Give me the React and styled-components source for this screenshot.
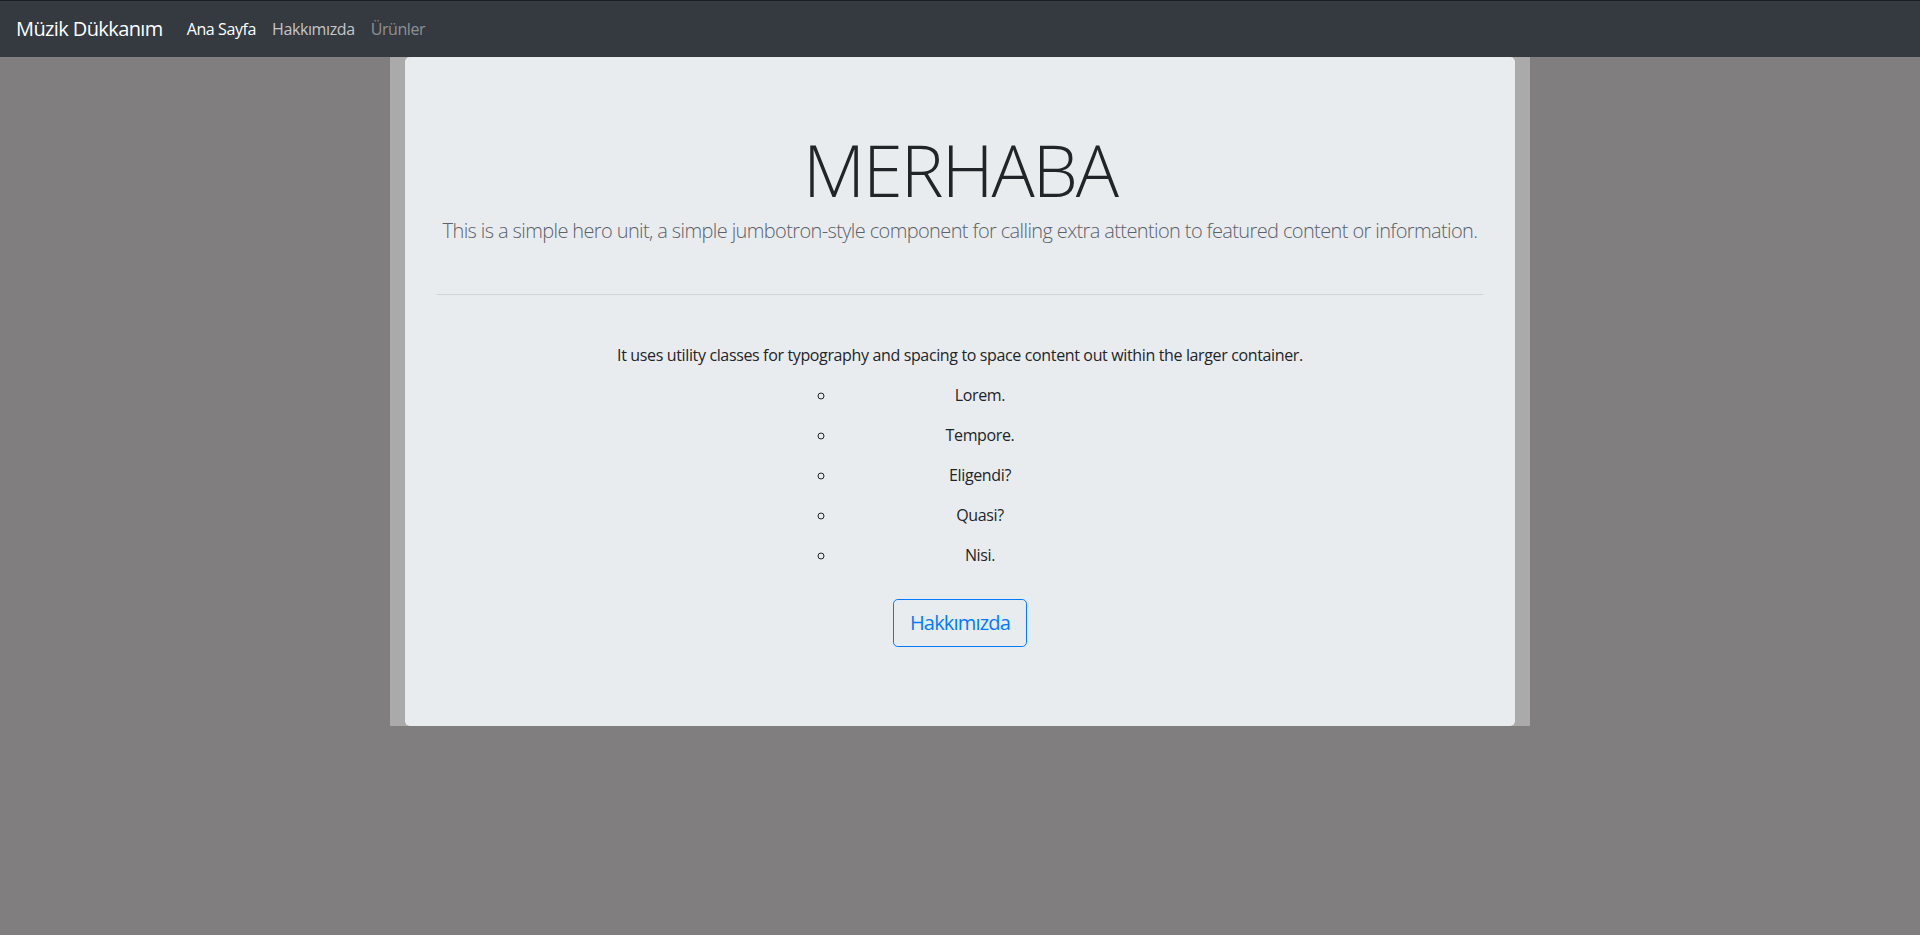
import React from "react";
import styled, { createGlobalStyle } from "styled-components";

const GlobalStyle = createGlobalStyle`
  html, body { margin: 0; padding: 0; }
  body {
    background: #807e7e;
    font-family: "Open Sans", "Noto Sans", sans-serif;
    color: #212529;
    -webkit-font-smoothing: antialiased;
  }
  * { box-sizing: border-box; }
`;

const Navbar = styled.nav`
  display: flex;
  align-items: center;
  padding: 8px 16px;
  background: #343a40;
  border-top: 1px solid #1c1f22;
`;

const Brand = styled.a`
  font-size: 20px;
  line-height: 30px;
  padding: 5px 0;
  margin-right: 16px;
  color: #fff;
  text-decoration: none;
  letter-spacing: -0.6px;
`;

const NavList = styled.div`
  display: flex;
`;

const NavLink = styled.a`
  padding: 8px;
  font-size: 16px;
  line-height: 24px;
  letter-spacing: -0.4px;
  text-decoration: none;
  color: ${(p) =>
    p.$state === "active"
      ? "#fff"
      : p.$state === "disabled"
      ? "rgba(255,255,255,0.45)"
      : "rgba(255,255,255,0.72)"};
`;

const Container = styled.main`
  width: 1140px;
  margin: 0 auto;
  padding: 0 15px;
  background: #aaaaaa;
`;

const Jumbotron = styled.section`
  display: flex;
  flex-direction: column;
  background: #e9ecef;
  border-radius: 4.8px;
  padding: 65px 32px 64px;
  text-align: center;
`;

const Title = styled.h1`
  margin: 0 0 4px;
  padding-top: 4px;
  font-size: 72px;
  line-height: 1.2;
  font-weight: 300;
  letter-spacing: -2px;
  color: #212529;
`;

const Lead = styled.p`
  margin: 0;
  font-size: 20px;
  line-height: 30px;
  font-weight: 300;
  color: #5a626a;
  letter-spacing: -0.62px;
`;

const Divider = styled.hr`
  margin: 48px 0;
  border: 0;
  border-top: 1px solid rgba(0, 0, 0, 0.1);
  width: 100%;
`;

const Text = styled.p`
  margin: 0 0 16px;
  font-size: 16px;
  line-height: 24px;
  letter-spacing: -0.36px;
`;

const List = styled.ul`
  margin: 0;
  padding: 0 0 0 40px;
  list-style: circle;
`;

const Item = styled.li`
  width: 289px;
  margin: 0 auto 16px;
  font-size: 16px;
  line-height: 24px;
  letter-spacing: -0.36px;
`;

const ButtonRow = styled.div`
  margin: 16px 0 15px;
  display: flex;
  justify-content: center;
`;

const OutlineButton = styled.a`
  display: inline-block;
  padding: 8px 16px;
  font-size: 20px;
  line-height: 30px;
  color: #007bff;
  border: 1px solid #007bff;
  border-radius: 4.8px;
  text-decoration: none;
  letter-spacing: -0.8px;
`;

const items = ["Lorem.", "Tempore.", "Eligendi?", "Quasi?", "Nisi."];

export default function App() {
  return (
    <>
      <GlobalStyle />
      <Navbar>
        <Brand href="#">Müzik Dükkanım</Brand>
        <NavList>
          <NavLink href="#" $state="active">Ana Sayfa</NavLink>
          <NavLink href="#">Hakkımızda</NavLink>
          <NavLink href="#" $state="disabled">Ürünler</NavLink>
        </NavList>
      </Navbar>
      <Container>
        <Jumbotron>
          <Title>MERHABA</Title>
          <Lead>
            This is a simple hero unit, a simple jumbotron-style component for calling extra attention to featured content or information.
          </Lead>
          <Divider />
          <Text>
            It uses utility classes for typography and spacing to space content out within the larger container.
          </Text>
          <List>
            {items.map((t) => (
              <Item key={t}>{t}</Item>
            ))}
          </List>
          <ButtonRow>
            <OutlineButton href="#">Hakkımızda</OutlineButton>
          </ButtonRow>
        </Jumbotron>
      </Container>
    </>
  );
}
